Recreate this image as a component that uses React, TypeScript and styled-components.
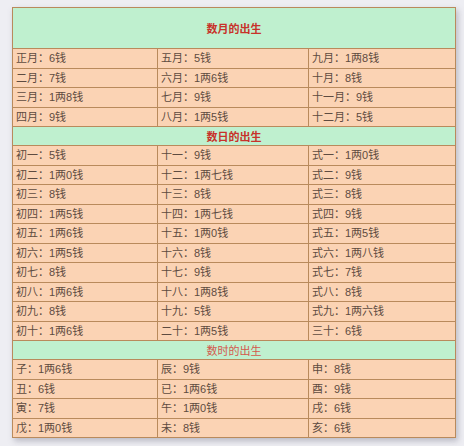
import React from 'react';
import styled, {createGlobalStyle} from 'styled-components';

const GlobalStyle = createGlobalStyle`
  html, body {
    margin: 0;
    padding: 0;
    background: #eeeef3;
  }
`;

const months = [
    ['正月：6钱', '五月：5钱', '九月：1两8钱'],
    ['二月：7钱', '六月：1两6钱', '十月：8钱'],
    ['三月：1两8钱', '七月：9钱', '十一月：9钱'],
    ['四月：9钱', '八月：1两5钱', '十二月：5钱'],
];

const days = [
    ['初一：5钱', '十一：9钱', '式一：1两0钱'],
    ['初二：1两0钱', '十二：1两七钱', '式二：9钱'],
    ['初三：8钱', '十三：8钱', '式三：8钱'],
    ['初四：1两5钱', '十四：1两七钱', '式四：9钱'],
    ['初五：1两6钱', '十五：1两0钱', '式五：1两5钱'],
    ['初六：1两5钱', '十六：8钱', '式六：1两八钱'],
    ['初七：8钱', '十七：9钱', '式七：7钱'],
    ['初八：1两6钱', '十八：1两8钱', '式八：8钱'],
    ['初九：8钱', '十九：5钱', '式九：1两六钱'],
    ['初十：1两6钱', '二十：1两5钱', '三十：6钱'],
];

const hours = [
    ['子：1两6钱', '辰：9钱', '申：8钱'],
    ['丑：6钱', '已：1两6钱', '酉：9钱'],
    ['寅：7钱', '午：1两0钱', '戌：6钱'],
    ['戊：1两0钱', '未：8钱', '亥：6钱'],
];

const Page = styled.div`
  padding: 7px 0 0 12px;
  height: 446px;
  box-sizing: border-box;
`;

const Table = styled.table`
  width: 443px;
  border-collapse: collapse;
  table-layout: fixed;
  border: 1px solid #e2ad74;
  box-shadow: 2px 3px 6px rgba(90, 90, 110, 0.35);
  font-family: "Liberation Sans", "Noto Sans CJK SC", sans-serif;
  font-size: 11px;
  color: #5e4b40;
`;

const Col = styled.col<{ $w: number }>`
  width: ${p => p.$w}px;
`;

const HeadCell = styled.td<{ $tall?: boolean; $light?: boolean }>`
  background: #bff0cf;
  height: ${p => (p.$tall ? '40px' : '18px')};
  text-align: center;
  padding: 0;
  border: 1px solid #b98a5c;
  color: ${p => (p.$light ? '#d4584c' : '#c8322a')};
  font-weight: ${p => (p.$light ? 'normal' : 'bold')};
  font-size: 11px;
`;

const Cell = styled.td`
  background: #fbd3b4;
  height: 18.5px;
  padding: 0 0 0 3px;
  border: 1px solid #b98a5c;
  white-space: nowrap;
  line-height: 18px;
`;

const Section = ({title, rows, tall, light}: { title: string; rows: string[][]; tall?: boolean; light?: boolean }) => (
    <>
        <tr>
            <HeadCell colSpan={3} $tall={tall} $light={light}>{title}</HeadCell>
        </tr>
        {rows.map((row, i) => (
            <tr key={i}>
                {row.map((c, j) => <Cell key={j}>{c}</Cell>)}
            </tr>
        ))}
    </>
);

export default function App() {
    return (
        <Page>
            <GlobalStyle/>
            <Table>
                <colgroup>
                    <Col $w={145}/>
                    <Col $w={151}/>
                    <Col $w={147}/>
                </colgroup>
                <tbody>
                <Section title="数月的出生" rows={months} tall/>
                <Section title="数日的出生" rows={days}/>
                <Section title="数时的出生" rows={hours} light/>
                </tbody>
            </Table>
        </Page>
    );
}
